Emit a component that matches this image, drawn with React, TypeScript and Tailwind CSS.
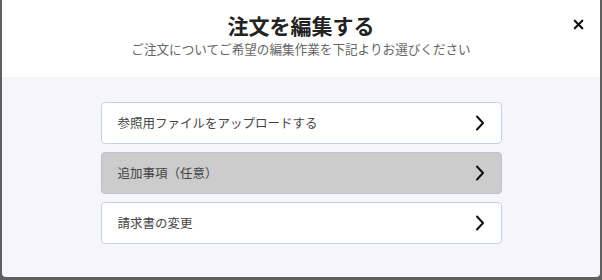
import { X } from 'lucide-react';

const items = [
  { id: 'upload', label: '参照用ファイルをアップロードする', active: false },
  { id: 'extra', label: '追加事項（任意）', active: true },
  { id: 'invoice', label: '請求書の変更', active: false }
];

function Chevron() {
  return (
    <svg width="10" height="16" viewBox="0 0 10 16" fill="none" className="text-[#111]">
      <path d="M2 1.5 L8 8 L2 14.5" stroke="currentColor" strokeWidth="2" strokeLinecap="round" strokeLinejoin="round" />
    </svg>
  );
}

export default function App() {
  return (
    <div
      className="h-[280px] w-[602px] bg-[#5f5f5f] pl-[2px] pr-[2px] pb-[3px]"
      style={{ fontFamily: '"Noto Sans CJK JP", "Noto Sans", sans-serif' }}
    >
      <div className="flex h-full flex-col overflow-hidden rounded-b-[4px] bg-[#f6f6fa]">
        <header className="relative flex h-[77px] flex-col items-center bg-white pt-[10px]">
          <h1 className="text-[21px] font-bold leading-[30px] text-[#222]">注文を編集する</h1>
          <p className="text-[12.6px] leading-[18px] text-[#666]">ご注文についてご希望の編集作業を下記よりお選びください</p>
          <button className="absolute right-[14px] top-[17px] text-[#111]">
            <X size={15} strokeWidth={3.5} />
          </button>
        </header>
        <div className="flex flex-col items-center gap-[8px] pt-[25px]">
          {items.map((item) => (
            <div
              key={item.id}
              className={
                item.active
                  ? 'flex h-[42px] w-[401px] items-center justify-between rounded-[4px] border border-[#b9c0dc] bg-[#cccccc] pl-[16px] pr-[16px]'
                  : 'flex h-[42px] w-[401px] items-center justify-between rounded-[4px] border border-[#c7cff0] bg-white pl-[16px] pr-[16px]'
              }
            >
              <span className="text-[12.5px] text-[#444]">{item.label}</span>
              <Chevron />
            </div>
          ))}
        </div>
      </div>
    </div>
  );
}
